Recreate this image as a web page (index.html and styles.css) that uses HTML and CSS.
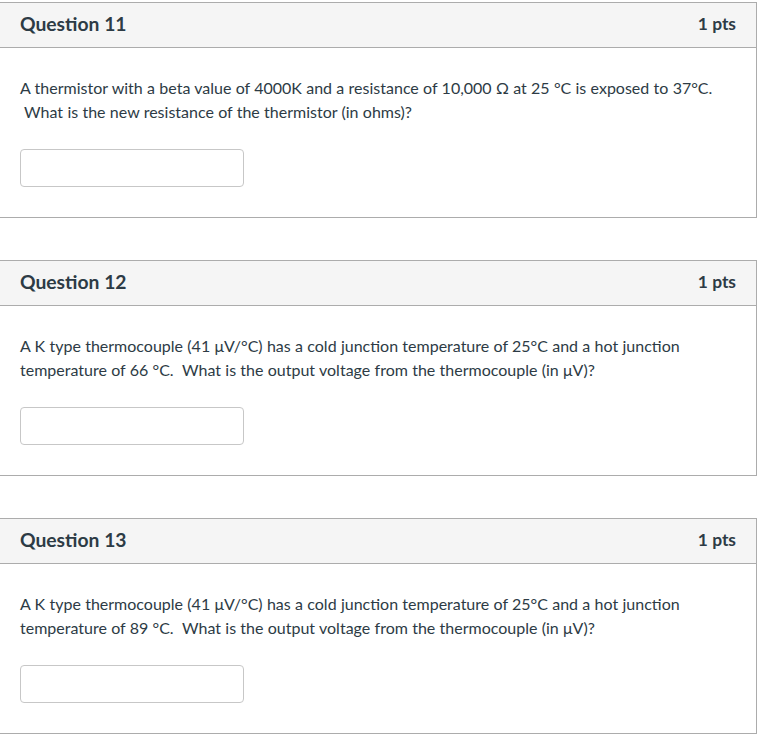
FILE: index.html
```html
<!DOCTYPE html>
<html>
<head>
<meta charset="utf-8">
<link rel="stylesheet" href="styles.css">
</head>
<body>
<div class="quiz">
  <div class="question">
    <div class="header">
      <span class="name">Question 11</span>
      <span class="pts">1 pts</span>
    </div>
    <div class="body">
      <p class="text">A thermistor with a beta value of 4000K and a resistance of 10,000 Ω at 25 °C is exposed to 37°C.<br>&nbsp;What is the new resistance of the thermistor (in ohms)?</p>
      <input class="answer" type="text">
    </div>
  </div>
  <div class="question">
    <div class="header">
      <span class="name">Question 12</span>
      <span class="pts">1 pts</span>
    </div>
    <div class="body">
      <p class="text">A K type thermocouple (41 μV/°C) has a cold junction temperature of 25°C and a hot junction<br>temperature of 66 °C.&nbsp; What is the output voltage from the thermocouple (in μV)?</p>
      <input class="answer" type="text">
    </div>
  </div>
  <div class="question">
    <div class="header">
      <span class="name">Question 13</span>
      <span class="pts">1 pts</span>
    </div>
    <div class="body">
      <p class="text">A K type thermocouple (41 μV/°C) has a cold junction temperature of 25°C and a hot junction<br>temperature of 89 °C.&nbsp; What is the output voltage from the thermocouple (in μV)?</p>
      <input class="answer" type="text">
    </div>
  </div>
</div>
</body>
</html>
```
FILE: styles.css
```css
html, body {
  margin: 0;
  padding: 0;
  background: #ffffff;
}
body {
  font-family: Lato, "Liberation Sans", sans-serif;
  color: #2d3b45;
}
.quiz {
  display: flex;
  flex-direction: column;
  gap: 42px;
  padding-top: 2px;
  margin-left: -1px;
  width: 758px;
}
.question {
  border: 1px solid #acacac;
  background: #fff;
}
.header {
  box-sizing: border-box;
  height: 45px;
  background: #f5f5f5;
  border-bottom: 1px solid #acacac;
  display: flex;
  align-items: center;
  justify-content: space-between;
  padding: 0 20px 4px 20px;
}
.name {
  font-size: 19.3px;
  font-weight: 700;
}
.pts {
  font-size: 17.4px;
  font-weight: 700;
  color: #2d3b45;
}
.body {
  padding: 28px 20px 30px 20px;
  display: flex;
  flex-direction: column;
  align-items: flex-start;
}
.text {
  margin: 0;
  font-size: 16px;
  line-height: 24px;
  word-spacing: 0.2px;
}
.answer {
  margin-top: 25px;
  box-sizing: border-box;
  width: 224px;
  height: 38px;
  border: 1px solid #c7c7c7;
  border-radius: 4px;
  background: #fff;
  padding: 0 8px;
  font: inherit;
}
```
